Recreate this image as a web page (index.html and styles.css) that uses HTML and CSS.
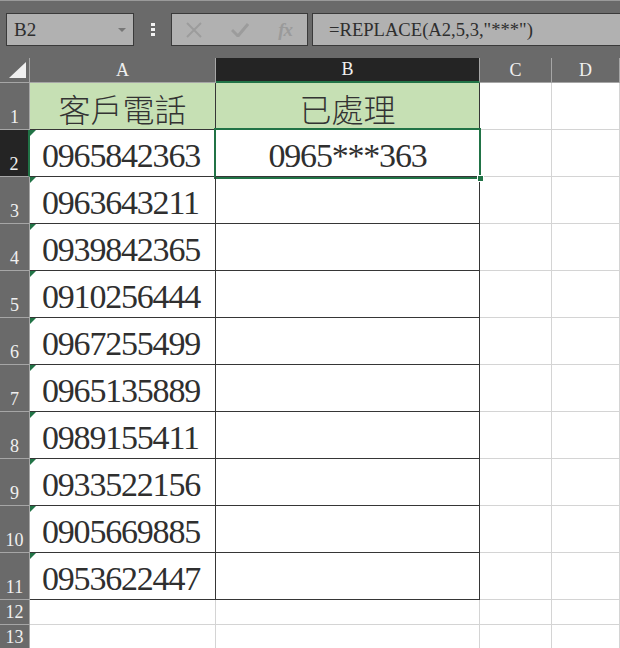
FILE: index.html
```html
<!DOCTYPE html>
<html lang="zh-Hant">
<head>
<meta charset="utf-8">
<title>REPLACE</title>
<link rel="stylesheet" href="styles.css">
</head>
<body>
<div class="toolbar">
  <div class="namebox"><span class="nb-text">B2</span><span class="nb-arrow"></span></div>
  <div class="grip"><i></i><i></i><i></i></div>
  <div class="fbtns">
    <svg class="fb-icon" width="16" height="16" viewBox="0 0 16 16"><path d="M1 1 L15 15 M15 1 L1 15" stroke="#9c9c9c" stroke-width="2" fill="none"/></svg>
    <svg class="fb-icon" width="18" height="14" viewBox="0 0 18 14"><path d="M1 7 L7 13 L17 1" stroke="#9c9c9c" stroke-width="3" fill="none"/></svg>
    <span class="fx"><i>f</i><i>x</i></span>
  </div>
  <div class="formula">=REPLACE(A2,5,3,"***")</div>
</div>
<div class="sheet">
  <div class="corner"><span class="corner-tri"></span></div>
  <div class="colh">A</div>
  <div class="colh colh-sel">B</div>
  <div class="colh">C</div>
  <div class="colh">D</div>

  <div class="rowh">1</div>
  <div class="cell head dark">客戶電話</div>
  <div class="cell head dark">已處理</div>
  <div class="cell"></div>
  <div class="cell"></div>

  <div class="rowh rowh-sel">2</div>
  <div class="cell num dark flag">0965842363</div>
  <div class="cell num center dark sel">0965***363<span class="handle"></span></div>
  <div class="cell"></div>
  <div class="cell"></div>

  <div class="rowh">3</div>
  <div class="cell num dark flag">0963643211</div>
  <div class="cell dark"></div>
  <div class="cell"></div>
  <div class="cell"></div>

  <div class="rowh">4</div>
  <div class="cell num dark flag">0939842365</div>
  <div class="cell dark"></div>
  <div class="cell"></div>
  <div class="cell"></div>

  <div class="rowh">5</div>
  <div class="cell num dark flag">0910256444</div>
  <div class="cell dark"></div>
  <div class="cell"></div>
  <div class="cell"></div>

  <div class="rowh">6</div>
  <div class="cell num dark flag">0967255499</div>
  <div class="cell dark"></div>
  <div class="cell"></div>
  <div class="cell"></div>

  <div class="rowh">7</div>
  <div class="cell num dark flag">0965135889</div>
  <div class="cell dark"></div>
  <div class="cell"></div>
  <div class="cell"></div>

  <div class="rowh">8</div>
  <div class="cell num dark flag">0989155411</div>
  <div class="cell dark"></div>
  <div class="cell"></div>
  <div class="cell"></div>

  <div class="rowh">9</div>
  <div class="cell num dark flag">0933522156</div>
  <div class="cell dark"></div>
  <div class="cell"></div>
  <div class="cell"></div>

  <div class="rowh">10</div>
  <div class="cell num dark flag">0905669885</div>
  <div class="cell dark"></div>
  <div class="cell"></div>
  <div class="cell"></div>

  <div class="rowh">11</div>
  <div class="cell num dark flag">0953622447</div>
  <div class="cell dark"></div>
  <div class="cell"></div>
  <div class="cell"></div>

  <div class="rowh">12</div>
  <div class="cell"></div>
  <div class="cell"></div>
  <div class="cell"></div>
  <div class="cell"></div>

  <div class="rowh">13</div>
  <div class="cell"></div>
  <div class="cell"></div>
  <div class="cell"></div>
  <div class="cell"></div>
</div>
</body>
</html>
```
FILE: styles.css
```css
* { box-sizing: border-box; }
html, body { margin: 0; padding: 0; }
body {
  width: 620px;
  height: 648px;
  overflow: hidden;
  background: #ffffff;
  font-family: "Liberation Serif", "Noto Sans CJK TC", serif;
}

.toolbar {
  height: 58px;
  background: #6a6a6a;
  border-top: 1px solid #9a9a9a;
  display: flex;
  align-items: flex-start;
  padding: 12px 0 0 6px;
}
.namebox {
  width: 128px;
  height: 33px;
  background: #b1b1b1;
  border: 1px solid #3a3a3a;
  display: flex;
  align-items: center;
  justify-content: space-between;
  padding: 0 7px 0 7px;
}
.nb-text {
  font-size: 19px;
  color: #2e2e2e;
  line-height: 1;
}
.nb-arrow {
  width: 0;
  height: 0;
  border-left: 4px solid transparent;
  border-right: 4px solid transparent;
  border-top: 4px solid #777;
}
.grip {
  width: 37px;
  height: 33px;
  display: flex;
  flex-direction: column;
  align-items: center;
  justify-content: center;
  gap: 2px;
}
.grip i {
  width: 4px;
  height: 3px;
  background: #f2f2f2;
}
.fbtns {
  width: 137px;
  height: 33px;
  background: #b1b1b1;
  border: 1px solid #3a3a3a;
  display: flex;
  align-items: center;
  justify-content: space-between;
  padding: 0 15px 0 14px;
}
.fx {
  font-family: "Liberation Serif", serif;
  font-style: italic;
  font-size: 19px;
  color: #9a9a9a;
  font-weight: bold;
  letter-spacing: -1px;
}
.fx i { font-style: italic; }
.formula {
  flex: 1;
  margin-left: 4px;
  height: 33px;
  background: #b1b1b1;
  border: 1px solid #3a3a3a;
  border-right: none;
  font-size: 18.6px;
  color: #2e2e2e;
  line-height: 31px;
  padding-left: 16px;
  white-space: nowrap;
}

.sheet {
  display: grid;
  grid-template-columns: 30px 186px 264px 72px 1fr;
  grid-template-rows: 25px repeat(11, 47px) 25px 25px;
}
.corner {
  background: #6a6a6a;
  border-right: 1px solid #a6a6a6;
  border-bottom: 1px solid #a6a6a6;
  position: relative;
}
.corner-tri {
  position: absolute;
  left: 9px;
  top: 4px;
  width: 0;
  height: 0;
  border-left: 17px solid transparent;
  border-bottom: 16px solid #f0f0f0;
}
.colh {
  background: #6a6a6a;
  border-right: 1px solid #a6a6a6;
  border-bottom: 1px solid #a6a6a6;
  color: #f0f0f0;
  font-size: 18px;
  display: flex;
  align-items: flex-end;
  justify-content: center;
  padding-bottom: 3px;
  line-height: 1;
}
.colh-sel {
  background: #242424;
  border-bottom: 2px solid #217346;
}
.rowh {
  background: #6a6a6a;
  border-right: 1px solid #a6a6a6;
  border-bottom: 1px solid #a6a6a6;
  color: #f0f0f0;
  font-size: 18px;
  display: flex;
  align-items: flex-end;
  justify-content: center;
  padding-bottom: 3px;
  line-height: 1;
}
.rowh-sel {
  background: #242424;
  border-right: 2px solid #217346;
}
.cell {
  border-right: 1px solid #d4d4d4;
  border-bottom: 1px solid #d4d4d4;
  position: relative;
  color: #2f2f2f;
  display: flex;
  align-items: flex-end;
}
.cell.dark {
  border-right-color: #363636;
  border-bottom-color: #363636;
}
.head {
  background: #c6e0b4;
  justify-content: center;
  font-family: "Noto Sans CJK TC", sans-serif;
  font-weight: 300;
  font-size: 32px;
  line-height: 1;
  padding-bottom: 5px;
  color: #333;
}
.num {
  font-size: 34px;
  letter-spacing: -1.2px;
  line-height: 1;
  padding-left: 12px;
  padding-bottom: 3px;
}
.center {
  justify-content: center;
  padding-left: 0;
}
.flag::before {
  content: "";
  position: absolute;
  left: 0;
  top: 0;
  width: 0;
  height: 0;
  border-top: 6px solid #217346;
  border-right: 6px solid transparent;
}
.sel::after {
  content: "";
  position: absolute;
  left: -2px;
  top: -2px;
  right: -2px;
  bottom: -3px;
  border: 2px solid #217346;
  pointer-events: none;
}
.handle {
  position: absolute;
  right: -5px;
  bottom: -6px;
  width: 7px;
  height: 7px;
  background: #217346;
  border: 1px solid #ffffff;
  z-index: 2;
}
```
